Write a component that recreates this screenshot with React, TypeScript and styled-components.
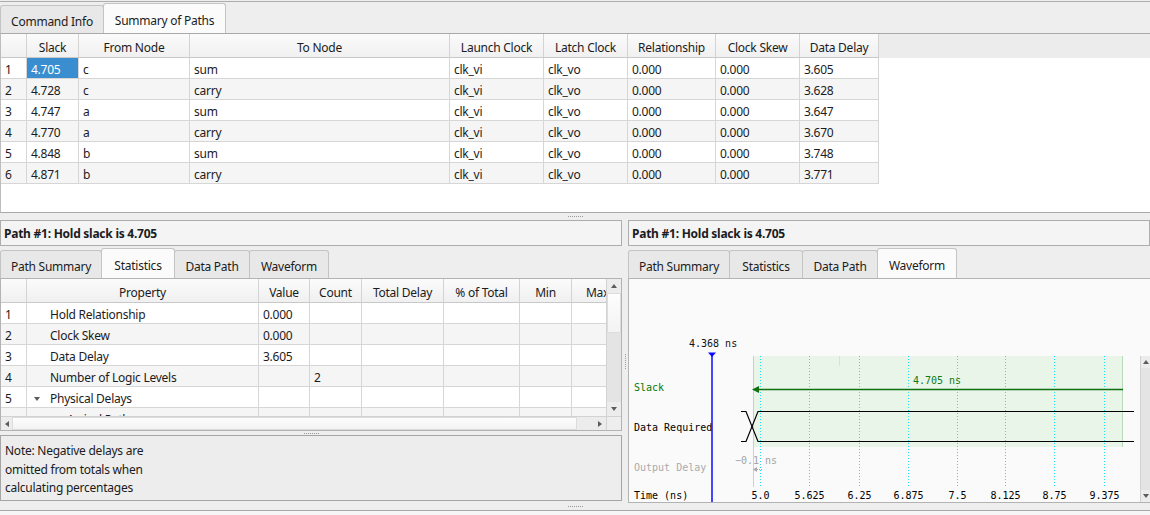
import React from "react";
import styled, { createGlobalStyle } from "styled-components";

const GlobalStyle = createGlobalStyle`
  html, body { margin: 0; padding: 0; }
  body {
    background: #eeeeee;
    font-family: "Noto Sans", "Open Sans", sans-serif;
    font-size: 12px;
    letter-spacing: -0.25px;
    color: #1b1b22;
  }
  *, *::before, *::after { box-sizing: border-box; }
`;

const Page = styled.div`
  width: 1150px;
  height: 515px;
  overflow: hidden;
  background: #eeeeee;
  display: flex;
  flex-direction: column;
`;

const TopSection = styled.section`
  margin-top: 1px;
  border-top: 1px solid #adadad;
  height: 212px;
  flex: none;
  display: flex;
  flex-direction: column;
`;

const TabStrip = styled.div<{ $h: number; $pt?: number }>`
  height: ${(p) => p.$h}px;
  padding-top: ${(p) => p.$pt ?? 0}px;
  flex: none;
  display: flex;
  align-items: flex-end;
`;

const Tab = styled.div<{ $active?: boolean; $w: number }>`
  width: ${(p) => p.$w}px;
  height: ${(p) => (p.$active ? "100%" : "calc(100% - 2px)")};
  margin-right: -1px;
  padding-top: 3px;
  display: flex;
  align-items: center;
  justify-content: center;
  white-space: nowrap;
  border: 1px solid #c4c4c4;
  border-bottom: none;
  border-radius: 3px 3px 0 0;
  background: ${(p) => (p.$active ? "#fbfbfb" : "#e8e8e8")};
  position: relative;
  z-index: ${(p) => (p.$active ? 1 : 0)};
`;

const TableFrame = styled.div`
  flex: 1;
  min-height: 0;
  overflow: hidden;
  border-top: 1px solid #a9a9a9;
  border-bottom: 1px solid #a9a9a9;
  border-left: 1px solid #bdbdbd;
  background: linear-gradient(#ececec 0 24px, #ffffff 24px);
`;

const DataGrid = styled.div<{ $cols: string }>`
  display: grid;
  grid-template-columns: ${(p) => p.$cols};
  grid-template-rows: 24px;
  grid-auto-rows: 21px;
  width: max-content;
`;

const HeadCell = styled.div`
  background: linear-gradient(#fbfbfb, #f0f0f0);
  border-right: 1px solid #d3d3d3;
  border-bottom: 1px solid #c8c8c8;
  padding-top: 3px;
  display: flex;
  align-items: center;
  justify-content: center;
  white-space: nowrap;
  overflow: hidden;
`;

const Cell = styled.div<{ $alt?: boolean; $sel?: boolean; $pl?: number }>`
  background: ${(p) => (p.$sel ? "#3a8ed0" : p.$alt ? "#f5f5f5" : "#ffffff")};
  color: ${(p) => (p.$sel ? "#ffffff" : "inherit")};
  border-right: 1px solid #d6d6d6;
  border-bottom: 1px solid #d6d6d6;
  padding-top: 3px;
  padding-left: ${(p) => p.$pl ?? 4}px;
  display: flex;
  align-items: center;
  white-space: nowrap;
  overflow: hidden;
`;

const TreeSlot = styled.span<{ $toggle?: boolean }>`
  width: 17px;
  flex: none;
  display: flex;
  align-items: center;
  padding-left: 1px;
  &::before {
    content: "";
    display: ${(p) => (p.$toggle ? "block" : "none")};
    border-left: 3px solid transparent;
    border-right: 3px solid transparent;
    border-top: 4px solid #5a5a5a;
  }
`;

const HSplitter = styled.div<{ $h: number }>`
  height: ${(p) => p.$h}px;
  flex: none;
  display: flex;
  align-items: center;
  justify-content: center;
  &::after {
    content: "";
    width: 15px;
    border-top: 1px dotted #9a9a9a;
  }
`;

const VSplitter = styled.div`
  width: 6px;
  flex: none;
  display: flex;
  align-items: center;
  justify-content: center;
  &::after {
    content: "";
    height: 15px;
    border-left: 1px dotted #9a9a9a;
  }
`;

const BottomSection = styled.div`
  height: 283px;
  flex: none;
  display: flex;
`;

const Panel = styled.div<{ $w?: number }>`
  ${(p) => (p.$w ? `width: ${p.$w}px; flex: none;` : "flex: 1; min-width: 0;")}
  display: flex;
  flex-direction: column;
`;

const TitleBox = styled.div`
  height: 26px;
  flex: none;
  margin-bottom: 2px;
  border: 1px solid #adadad;
  background: #f4f4f4;
  font-weight: 700;
  padding-left: 3px;
  padding-top: 1px;
  display: flex;
  align-items: center;
  white-space: nowrap;
`;

const GridFrame = styled.div`
  height: 153px;
  flex: none;
  border: 1px solid #b3b3b3;
  background: #ffffff;
  display: flex;
  flex-direction: column;
`;

const GridBody = styled.div`
  flex: 1;
  min-height: 0;
  display: flex;
`;

const GridViewport = styled.div`
  flex: 1;
  min-width: 0;
  overflow: hidden;
  background: linear-gradient(#ececec 0 24px, #ffffff 24px);
`;

const ScrollTrack = styled.div<{ $dir: "v" | "h"; $size?: number }>`
  ${(p) =>
    p.$dir === "v"
      ? `${p.$size ? `width: ${p.$size}px; flex: none;` : "flex: 1;"} flex-direction: column; border-left: 1px solid #d2d2d2;`
      : `height: ${p.$size}px; flex: none; flex-direction: row; border-top: 1px solid #d2d2d2;`}
  display: flex;
  background: #e4e4e4;
`;

const ScrollButton = styled.div<{ $len: number; $dir: "v" | "h" }>`
  ${(p) => (p.$dir === "v" ? `height: ${p.$len}px;` : `width: ${p.$len}px;`)}
  flex: none;
  display: flex;
  align-items: center;
  justify-content: center;
  background: #ececec;
`;

const Thumb = styled.div<{ $len?: number }>`
  ${(p) => (p.$len ? `flex: 0 0 ${p.$len}px;` : "flex: 1;")}
  background: linear-gradient(#fdfdfd, #f3f3f3);
  border: 1px solid #dcdcdc;
`;

const TrackFill = styled.div`
  flex: 1;
`;

const Corner = styled.div`
  width: 15px;
  flex: none;
  background: #eeeeee;
  border-left: 1px solid #d2d2d2;
`;

const Arrow = styled.span<{ $dir: "up" | "down" | "left" | "right" }>`
  width: 0;
  height: 0;
  ${(p) =>
    p.$dir === "up"
      ? "border-left: 3px solid transparent; border-right: 3px solid transparent; border-bottom: 4px solid #5c5c5c;"
      : p.$dir === "down"
      ? "border-left: 3px solid transparent; border-right: 3px solid transparent; border-top: 4px solid #5c5c5c;"
      : p.$dir === "left"
      ? "border-top: 3px solid transparent; border-bottom: 3px solid transparent; border-right: 4px solid #5c5c5c;"
      : "border-top: 3px solid transparent; border-bottom: 3px solid transparent; border-left: 4px solid #5c5c5c;"}
`;

const NoteBox = styled.div`
  height: 66px;
  flex: none;
  margin-bottom: 2px;
  border: 1px solid #a5a5a5;
  background: #ededed;
  padding: 6px 4px 0;
  line-height: 18.5px;
`;

const WaveFrame = styled.div`
  flex: 1;
  min-height: 0;
  border: 1px solid #b3b3b3;
  border-right: none;
  background: #fafafa;
  display: flex;
`;

const ChartSvg = styled.svg`
  flex: none;
  display: block;
  font-family: "DejaVu Sans Mono", "Liberation Mono", monospace;
  font-size: 10px;
  letter-spacing: 0;
`;

const WaveScrollColumn = styled.div`
  flex: 1;
  display: flex;
  flex-direction: column;
`;

const Spacer = styled.div<{ $h: number }>`
  height: ${(p) => p.$h}px;
  flex: none;
`;

const BottomBar = styled.div`
  flex: 1;
  border-top: 1px solid #a9a9a9;
  background: #f6f6f6;
`;

const summaryCols = "26px 52px 111px 260px 94px 84px 88px 84px 79px";
const summaryHeads = ["", "Slack", "From Node", "To Node", "Launch Clock", "Latch Clock", "Relationship", "Clock Skew", "Data Delay"];
const summaryRows = [
  ["1", "4.705", "c", "sum", "clk_vi", "clk_vo", "0.000", "0.000", "3.605"],
  ["2", "4.728", "c", "carry", "clk_vi", "clk_vo", "0.000", "0.000", "3.628"],
  ["3", "4.747", "a", "sum", "clk_vi", "clk_vo", "0.000", "0.000", "3.647"],
  ["4", "4.770", "a", "carry", "clk_vi", "clk_vo", "0.000", "0.000", "3.670"],
  ["5", "4.848", "b", "sum", "clk_vi", "clk_vo", "0.000", "0.000", "3.748"],
  ["6", "4.871", "b", "carry", "clk_vi", "clk_vo", "0.000", "0.000", "3.771"],
];

const statCols = "26px 232px 51px 52px 82px 76px 52px 52px";
const statHeads = ["", "Property", "Value", "Count", "Total Delay", "% of Total", "Min", "Max"];
type StatRow = { n: string; prop: string; value?: string; count?: string; tree?: boolean; indent?: number };
const statRows: StatRow[] = [
  { n: "1", prop: "Hold Relationship", value: "0.000" },
  { n: "2", prop: "Clock Skew", value: "0.000" },
  { n: "3", prop: "Data Delay", value: "3.605" },
  { n: "4", prop: "Number of Logic Levels", count: "2" },
  { n: "5", prop: "Physical Delays", tree: true },
  { n: "", prop: "Arrival Path", indent: 40 },
];

const bottomTabs = [
  { label: "Path Summary", w: 102 },
  { label: "Statistics", w: 74 },
  { label: "Data Path", w: 76 },
  { label: "Waveform", w: 80 },
];

const gridXs = [760.5, 809.5, 859.5, 908.5, 957.5, 1005.5, 1054.5, 1104.5];
const timeLabels = ["5.0", "5.625", "6.25", "6.875", "7.5", "8.125", "8.75", "9.375"];

function SummaryTable() {
  return (
    <TableFrame>
      <DataGrid $cols={summaryCols}>
        {summaryHeads.map((h, i) => (
          <HeadCell key={"h" + i}>{h}</HeadCell>
        ))}
        {summaryRows.map((row, r) =>
          row.map((v, c) => (
            <Cell key={r + "-" + c} $alt={r % 2 === 1} $sel={r === 0 && c === 1}>
              {v}
            </Cell>
          ))
        )}
      </DataGrid>
    </TableFrame>
  );
}

function StatisticsTable() {
  return (
    <GridFrame>
      <GridBody>
        <GridViewport>
          <DataGrid $cols={statCols}>
            {statHeads.map((h, i) => (
              <HeadCell key={"sh" + i}>{h}</HeadCell>
            ))}
            {statRows.map((row, r) => (
              <React.Fragment key={"sr" + r}>
                <Cell $alt={r % 2 === 1}>{row.n}</Cell>
                <Cell $alt={r % 2 === 1} $pl={row.indent ?? 6}>
                  {row.indent ? null : <TreeSlot $toggle={row.tree} />}
                  {row.prop}
                </Cell>
                <Cell $alt={r % 2 === 1}>{row.value ?? ""}</Cell>
                <Cell $alt={r % 2 === 1}>{row.count ?? ""}</Cell>
                <Cell $alt={r % 2 === 1} />
                <Cell $alt={r % 2 === 1} />
                <Cell $alt={r % 2 === 1} />
                <Cell $alt={r % 2 === 1} />
              </React.Fragment>
            ))}
          </DataGrid>
        </GridViewport>
        <ScrollTrack $dir="v" $size={15}>
          <ScrollButton $dir="v" $len={14}>
            <Arrow $dir="up" />
          </ScrollButton>
          <Thumb $len={40} />
          <TrackFill />
          <ScrollButton $dir="v" $len={14}>
            <Arrow $dir="down" />
          </ScrollButton>
        </ScrollTrack>
      </GridBody>
      <ScrollTrack $dir="h" $size={14}>
        <ScrollButton $dir="h" $len={11}>
          <Arrow $dir="left" />
        </ScrollButton>
        <Thumb />
        <ScrollButton $dir="h" $len={16} />
        <ScrollButton $dir="h" $len={13}>
          <Arrow $dir="right" />
        </ScrollButton>
        <Corner />
      </ScrollTrack>
    </GridFrame>
  );
}

function WaveformChart() {
  return (
    <ChartSvg width={511} height={223} viewBox="629 279 511 223">
      <rect x={753} y={356} width={370} height={91} fill="#eaf5ea" />
      <line x1={753.5} y1={356} x2={753.5} y2={447} stroke="#b7dcb7" />
      <line x1={1122.5} y1={356} x2={1122.5} y2={447} stroke="#b7dcb7" />
      <line x1={753.5} y1={447} x2={753.5} y2={487} stroke="#cfcfcf" />
      <line x1={839.5} y1={356} x2={839.5} y2={366} stroke="#dedede" />
      {gridXs.map((x) => (
        <line key={x} x1={x} y1={356} x2={x} y2={487} stroke="#19e3ef" strokeDasharray="1 2" />
      ))}
      <text x={634} y={391} fill="#087808">Slack</text>
      <line x1={755} y1={389.5} x2={1123} y2={389.5} stroke="#0f700f" strokeWidth={1.4} />
      <polygon points="752,389.5 759,386 759,393" fill="#0f700f" />
      <text x={937} y={384} fill="#117a11" textAnchor="middle">4.705 ns</text>
      <text x={634} y={431} fill="#000">Data Required</text>
      <g stroke="#000" strokeWidth={1.2} fill="none">
        <polyline points="741,411.5 746,411.5 758,441.5 1134,441.5" />
        <polyline points="741,441.5 746,441.5 758,411.5 1134,411.5" />
      </g>
      <text x={634} y={471} fill="#ababab">Output Delay</text>
      <text x={735} y={464} fill="#a5a5a5">−0.1 ns</text>
      <polygon points="753,469.5 757,467 757,472" fill="#a8a8a8" />
      <line x1={757} y1={469.5} x2={762} y2={469.5} stroke="#a8a8a8" strokeDasharray="1 1" />
      <line x1={712} y1={354} x2={712} y2={502} stroke="#0a0aff" strokeWidth={1.5} />
      <polygon points="708,352.5 716,352.5 712,357" fill="#0a0aff" />
      <text x={689} y={347} fill="#111">4.368 ns</text>
      <text x={634} y={499} fill="#000">Time (ns)</text>
      {timeLabels.map((t, i) => (
        <text key={t} x={gridXs[i]} y={499} fill="#000" textAnchor="middle">
          {t}
        </text>
      ))}
    </ChartSvg>
  );
}

export default function App() {
  return (
    <Page>
      <GlobalStyle />
      <TopSection>
        <TabStrip $h={31} $pt={1}>
          <Tab $w={104}>Command Info</Tab>
          <Tab $w={123} $active>
            Summary of Paths
          </Tab>
        </TabStrip>
        <SummaryTable />
      </TopSection>
      <HSplitter $h={7} />
      <BottomSection>
        <Panel $w={622}>
          <TitleBox>Path #1: Hold slack is 4.705</TitleBox>
          <TabStrip $h={30}>
            {bottomTabs.map((t) => (
              <Tab key={t.label} $w={t.w} $active={t.label === "Statistics"}>
                {t.label}
              </Tab>
            ))}
          </TabStrip>
          <StatisticsTable />
          <HSplitter $h={4} />
          <NoteBox>
            Note: Negative delays are
            <br />
            omitted from totals when
            <br />
            calculating percentages
          </NoteBox>
        </Panel>
        <VSplitter />
        <Panel>
          <TitleBox>Path #1: Hold slack is 4.705</TitleBox>
          <TabStrip $h={30}>
            {bottomTabs.map((t) => (
              <Tab key={t.label} $w={t.w} $active={t.label === "Waveform"}>
                {t.label}
              </Tab>
            ))}
          </TabStrip>
          <WaveFrame>
            <WaveformChart />
            <WaveScrollColumn>
              <Spacer $h={77} />
              <ScrollTrack $dir="v">
                <ScrollButton $dir="v" $len={12}>
                  <Arrow $dir="up" />
                </ScrollButton>
                <TrackFill />
                <ScrollButton $dir="v" $len={12}>
                  <Arrow $dir="down" />
                </ScrollButton>
              </ScrollTrack>
            </WaveScrollColumn>
          </WaveFrame>
        </Panel>
      </BottomSection>
      <HSplitter $h={7} />
      <BottomBar />
    </Page>
  );
}
